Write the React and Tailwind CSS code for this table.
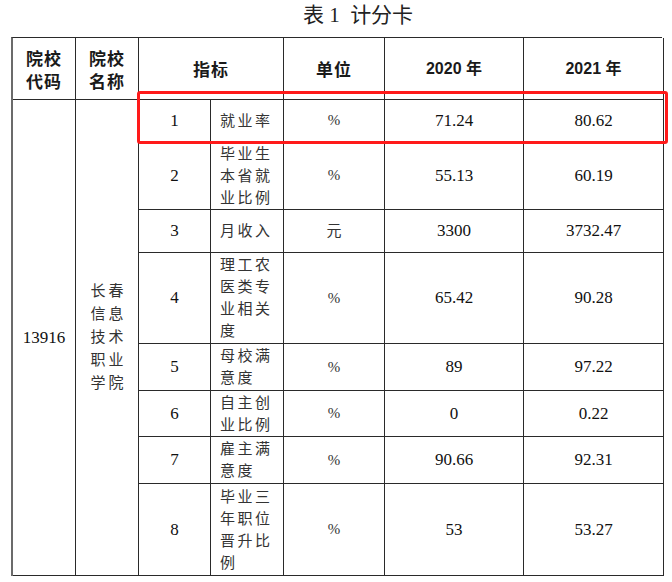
const rows = [
  { no: '1', lines: ['就业率'], unit: '%', y20: '71.24', y21: '80.62' },
  { no: '2', lines: ['毕业生', '本省就', '业比例'], unit: '%', y20: '55.13', y21: '60.19' },
  { no: '3', lines: ['月收入'], unit: '元', y20: '3300', y21: '3732.47' },
  { no: '4', lines: ['理工农', '医类专', '业相关', '度'], unit: '%', y20: '65.42', y21: '90.28' },
  { no: '5', lines: ['母校满', '意度'], unit: '%', y20: '89', y21: '97.22' },
  { no: '6', lines: ['自主创', '业比例'], unit: '%', y20: '0', y21: '0.22' },
  { no: '7', lines: ['雇主满', '意度'], unit: '%', y20: '90.66', y21: '92.31' },
  { no: '8', lines: ['毕业三', '年职位', '晋升比', '例'], unit: '%', y20: '53', y21: '53.27' },
]

const cell = 'border-r border-b border-[#2a2a2a] flex items-center justify-center overflow-hidden'
const num = "font-['Liberation_Serif','Times_New_Roman',serif] text-[17px] text-[#111]"
const head = "font-['Noto_Sans_CJK_SC',sans-serif] font-bold text-[17px] tracking-[1px]"

export default function App() {
  return (
    <div className="w-[672px] h-[582px] bg-white text-[#1a1a1a] font-['Liberation_Serif','Noto_Sans_CJK_SC',serif]">
      {/* title */}
      <div className="h-[37px] pl-[44px] text-center text-[21px] leading-[30px] text-[#222]">
        表 <span className="font-['Liberation_Serif',serif]">1</span>&nbsp; 计分卡
      </div>

      <div className="relative ml-[11px] w-[651px]">
        <div className="grid grid-cols-[63px_63px_72px_73px_101px_139px_140px] grid-rows-[62px_42px_68px_43px_91px_47px_46px_47px_92px] border-l-2 border-t border-l-[#6b6b6b] border-t-[#2a2a2a]">
          {/* header */}
          <div className={`${cell} ${head} flex-col leading-[23px]`}>
            <span>院校</span>
            <span>代码</span>
          </div>
          <div className={`${cell} ${head} flex-col leading-[23px]`}>
            <span>院校</span>
            <span>名称</span>
          </div>
          <div className={`${cell} ${head} col-span-2`}>指标</div>
          <div className={`${cell} ${head}`}>单位</div>
          <div className={`${cell} font-['Liberation_Sans','Noto_Sans_CJK_SC',sans-serif] text-[16px] font-bold`}>2020 年</div>
          <div className={`${cell} font-['Liberation_Sans','Noto_Sans_CJK_SC',sans-serif] text-[16px] font-bold`}>2021 年</div>

          {/* school code & name */}
          <div className={`${cell} ${num} col-start-1 row-start-2 row-span-8`}>13916</div>
          <div className={`${cell} col-start-2 row-start-2 row-span-8 flex-col text-[15px] leading-[23px] tracking-[3px] text-[#333] pl-[3px]`}>
            <span>长春</span>
            <span>信息</span>
            <span>技术</span>
            <span>职业</span>
            <span>学院</span>
          </div>

          {rows.map((r) => (
            <Row key={r.no} r={r} />
          ))}
        </div>

        {/* highlight */}
        <div className="absolute left-[126px] top-[54px] w-[531px] h-[53px] border-[3px] border-[#ff1a1a] rounded-[3px] pointer-events-none" />
      </div>
    </div>
  )
}

function Row({ r }) {
  return (
    <>
      <div className={`${cell} ${num} col-start-3`}>{r.no}</div>
      <div className={`${cell} !justify-start pl-[9px] text-[15px] leading-[22px] tracking-[2.5px] text-[#333]`}>
        <div className="flex flex-col">
          {r.lines.map((l, i) => (
            <span key={i}>{l}</span>
          ))}
        </div>
      </div>
      <div className={`${cell} text-[15px] text-[#333]`}>{r.unit}</div>
      <div className={`${cell} ${num}`}>{r.y20}</div>
      <div className={`${cell} ${num}`}>{r.y21}</div>
    </>
  )
}
